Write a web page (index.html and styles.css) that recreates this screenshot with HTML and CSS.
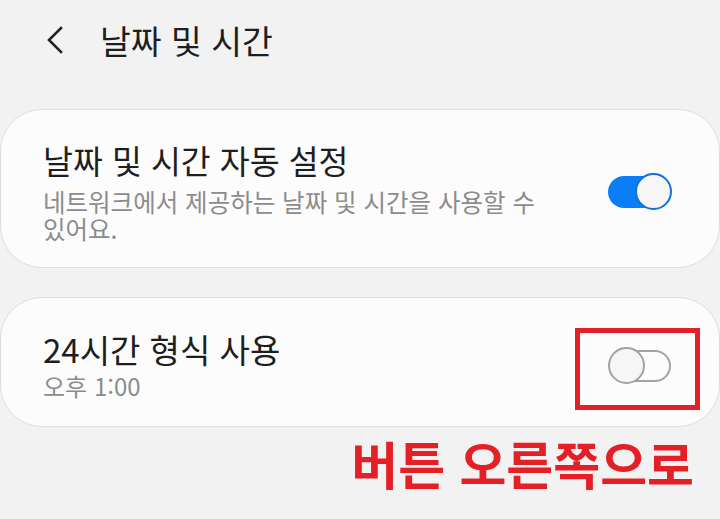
FILE: index.html
```html
<!DOCTYPE html>
<html lang="ko">
<head>
<meta charset="utf-8">
<title>날짜 및 시간</title>
<link rel="stylesheet" href="styles.css">
</head>
<body>
<header class="topbar">
  <span class="back" aria-label="뒤로">
    <svg width="18" height="28" viewBox="0 0 18 28"><path d="M15 2 L3 14 L15 26" fill="none" stroke="#222" stroke-width="2.6" stroke-linecap="square"/></svg>
  </span>
  <h1 class="page-title">날짜 및 시간</h1>
</header>
<main class="list">
  <section class="card card-auto">
    <div class="text">
      <div class="title">날짜 및 시간 자동 설정</div>
      <div class="sub">네트워크에서 제공하는 날짜 및 시간을 사용할 수 있어요.</div>
    </div>
    <span class="switch on"><span class="knob"></span></span>
  </section>
  <section class="card card-24h">
    <div class="text">
      <div class="title">24시간 형식 사용</div>
      <div class="sub">오후 1:00</div>
    </div>
    <span class="switch off"><span class="knob"></span><span class="highlight"></span></span>
  </section>
  <p class="note">버튼 오른쪽으로</p>
</main>
</body>
</html>
```

FILE: styles.css
```css
html, body {
  margin: 0;
  padding: 0;
}
body {
  background: #f2f2f2;
  font-family: "Noto Sans CJK KR", "Noto Sans", sans-serif;
  color: #1e1e1e;
  width: 720px;
  height: 519px;
  overflow: hidden;
  word-break: keep-all;
}
.topbar {
  height: 80px;
  display: flex;
  align-items: center;
  padding-left: 46px;
}
.back {
  display: flex;
  width: 18px;
  height: 28px;
  margin-right: 36px;
}
.page-title {
  margin: 0;
  font-size: 33.5px;
  font-weight: 400;
  line-height: 40px;
  color: #1e1e1e;
}
.list {
  padding-top: 29px;
}
.card {
  display: flex;
  align-items: center;
  background: #fcfcfc;
  border: 1px solid #dedede;
  border-radius: 42px;
  padding: 0 47px 0 42px;
  box-sizing: border-box;
  width: 720px;
}
.card-auto {
  height: 159px;
  padding-top: 5px;
}
.card-24h {
  height: 130px;
  margin-top: 29px;
  padding-top: 6px;
}
.text {
  flex: 1;
  padding-right: 60px;
}
.title {
  font-size: 32.5px;
  line-height: 40px;
  color: #1e1e1e;
}
.sub {
  font-size: 24.5px;
  line-height: 27px;
  color: #8c8c8c;
  margin-top: 8px;
}
.card-24h .title {
  font-size: 33px;
}
.card-24h .sub {
  margin-top: 2px;
  font-size: 24px;
  line-height: 30px;
}
.switch {
  position: relative;
  width: 64px;
  height: 37px;
  flex: none;
}
.switch::before {
  content: "";
  position: absolute;
  left: 0;
  right: 1px;
  top: 3px;
  bottom: 2px;
  border-radius: 17px;
  box-sizing: border-box;
}
.switch.on::before {
  background: #0b7ef5;
}
.switch.off::before {
  border: 2px solid #a3a3a3;
  left: 2px;
}
.knob {
  position: absolute;
  top: 0;
  width: 37px;
  height: 37px;
  border-radius: 50%;
  box-sizing: border-box;
  background: #f6f6f6;
}
.switch.on .knob {
  right: 0;
  border: 2px solid #1670d8;
}
.switch.off .knob {
  left: 0;
  border: 2px solid #a3a3a3;
}
.highlight {
  position: absolute;
  left: -33px;
  top: -19px;
  width: 125px;
  height: 82px;
  border: 5px solid #e41f26;
  box-sizing: border-box;
}
.note {
  margin: 6px 0 0;
  padding-right: 26px;
  text-align: right;
  font-size: 51px;
  font-weight: 700;
  line-height: 60px;
  color: #e41f26;
}
```
